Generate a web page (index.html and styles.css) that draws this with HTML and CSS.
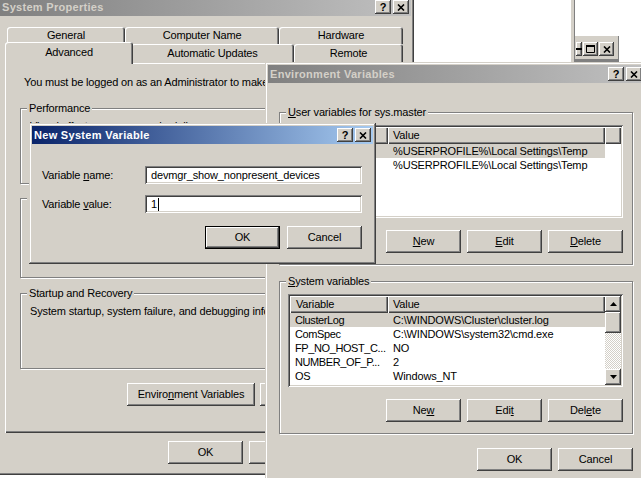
FILE: index.html
```html
<!DOCTYPE html>
<html lang="en">
<head>
    <meta charset="UTF-8">
    <title>System Properties</title>
    <link rel="stylesheet" href="styles.css">
</head>
<body>
    <!-- bits of the windows lying behind -->
    <div class="bg-edge"></div>
    <div class="bg-bar">
        <div class="tbtn cut">
            <svg width="6" height="2" viewBox="0 0 6 2"><path d="M0 1h6" stroke="#000" stroke-width="2"/></svg>
        </div>
        <div class="tbtn">
            <svg width="9" height="8" viewBox="0 0 9 8"><path d="M0.5 1.5h8v6h-8z" fill="none" stroke="#000"/><path d="M0 1h9" stroke="#000" stroke-width="2"/></svg>
        </div>
        <div class="tbtn">
            <svg width="8" height="7" viewBox="0 0 8 7"><path d="M1 0.5l6 6M7 0.5l-6 6" stroke="#000" stroke-width="1.6"/></svg>
        </div>
    </div>

    <!-- System Properties -->
    <div class="win sysprops">
        <div class="title inactive">
            <span class="caption">System Properties</span>
            <div class="tbtn help">?</div>
            <div class="tbtn">
                <svg width="8" height="7" viewBox="0 0 8 7"><path d="M1 0.5l6 6M7 0.5l-6 6" stroke="#000" stroke-width="1.6"/></svg>
            </div>
        </div>
        <div class="tabs">
            <div class="tab-row back">
                <div class="tab t-general">General</div>
                <div class="tab t-name">Computer Name</div>
                <div class="tab t-hardware">Hardware</div>
            </div>
            <div class="tab-row front">
                <div class="tab t-advanced sel">Advanced</div>
                <div class="tab t-updates">Automatic Updates</div>
                <div class="tab t-remote">Remote</div>
            </div>
        </div>
        <div class="panel">
            <div class="note">You must be logged on as an Administrator to make most of these changes.</div>
            <div class="group perf">
                <span class="group-label">Performance</span>
                <div class="group-text">Visual effects, processor scheduling, memory usage, and virtual memory</div>
                <div class="group-foot"><button class="btn">Settings</button></div>
            </div>
            <div class="group profiles">
                <span class="group-label">User Profiles</span>
                <div class="group-text">Desktop settings related to your logon</div>
                <div class="group-foot"><button class="btn">Settings</button></div>
            </div>
            <div class="group startup">
                <span class="group-label">Startup and Recovery</span>
                <div class="group-text">System startup, system failure, and debugging information</div>
                <div class="group-foot"><button class="btn">Settings</button></div>
            </div>
            <div class="panel-buttons">
                <button class="btn wide">Enviro<u>n</u>ment Variables</button>
                <button class="btn wider">E<u>r</u>ror Reporting</button>
            </div>
        </div>
        <div class="dlg-buttons sys">
            <button class="btn">OK</button>
            <button class="btn">Cancel</button>
            <button class="btn"><u>A</u>pply</button>
        </div>
    </div>

    <!-- Environment Variables -->
    <div class="win envvars">
        <div class="title inactive">
            <span class="caption">Environment Variables</span>
            <div class="tbtn help">?</div>
            <div class="tbtn">
                <svg width="8" height="7" viewBox="0 0 8 7"><path d="M1 0.5l6 6M7 0.5l-6 6" stroke="#000" stroke-width="1.6"/></svg>
            </div>
        </div>
        <div class="env-body">
            <div class="group env-group">
                <span class="group-label"><u>U</u>ser variables for sys.master</span>
                <div class="list">
                    <div class="list-main">
                        <div class="list-head">
                            <div class="hcell c-var">Variable</div>
                            <div class="hcell c-val">Value</div>
                            <div class="hcell c-fill"></div>
                        </div>
                        <div class="lrow sel"><span class="c-var">TEMP</span><span class="c-val">%USERPROFILE%\Local Settings\Temp</span></div>
                        <div class="lrow"><span class="c-var">TMP</span><span class="c-val">%USERPROFILE%\Local Settings\Temp</span></div>
                    </div>
                </div>
                <div class="group-buttons">
                    <button class="btn"><u>N</u>ew</button>
                    <button class="btn"><u>E</u>dit</button>
                    <button class="btn"><u>D</u>elete</button>
                </div>
            </div>
            <div class="group env-group system">
                <span class="group-label"><u>S</u>ystem variables</span>
                <div class="list">
                    <div class="list-main">
                        <div class="list-head">
                            <div class="hcell c-var">Variable</div>
                            <div class="hcell c-val">Value</div>
                        </div>
                        <div class="lrow sel"><span class="c-var">ClusterLog</span><span class="c-val">C:\WINDOWS\Cluster\cluster.log</span></div>
                        <div class="lrow"><span class="c-var">ComSpec</span><span class="c-val">C:\WINDOWS\system32\cmd.exe</span></div>
                        <div class="lrow"><span class="c-var">FP_NO_HOST_C...</span><span class="c-val">NO</span></div>
                        <div class="lrow"><span class="c-var">NUMBER_OF_P...</span><span class="c-val">2</span></div>
                        <div class="lrow"><span class="c-var">OS</span><span class="c-val">Windows_NT</span></div>
                    </div>
                    <div class="scrollbar">
                        <div class="sbtn">
                            <svg width="7" height="4" viewBox="0 0 7 4"><path d="M3.5 0L7 4H0z" fill="#000"/></svg>
                        </div>
                        <div class="thumb"></div>
                        <div class="track"></div>
                        <div class="sbtn">
                            <svg width="7" height="4" viewBox="0 0 7 4"><path d="M0 0h7L3.5 4z" fill="#000"/></svg>
                        </div>
                    </div>
                </div>
                <div class="group-buttons">
                    <button class="btn">Ne<u>w</u></button>
                    <button class="btn">Edi<u>t</u></button>
                    <button class="btn">Del<u>e</u>te</button>
                </div>
            </div>
            <div class="dlg-buttons env">
                <button class="btn">OK</button>
                <button class="btn">Cancel</button>
            </div>
        </div>
    </div>

    <!-- New System Variable -->
    <div class="win newvar">
        <div class="title active">
            <span class="caption">New System Variable</span>
            <div class="tbtn help">?</div>
            <div class="tbtn">
                <svg width="8" height="7" viewBox="0 0 8 7"><path d="M1 0.5l6 6M7 0.5l-6 6" stroke="#000" stroke-width="1.6"/></svg>
            </div>
        </div>
        <div class="form">
            <div class="field-row">
                <label>Variable <u>n</u>ame:</label>
                <div class="textbox">devmgr_show_nonpresent_devices</div>
            </div>
            <div class="field-row">
                <label>Variable <u>v</u>alue:</label>
                <div class="textbox">1<span class="caret"></span></div>
            </div>
            <div class="form-buttons">
                <button class="btn default">OK</button>
                <button class="btn">Cancel</button>
            </div>
        </div>
    </div>
</body>
</html>
```

FILE: styles.css
```css
* {
    box-sizing: border-box;
}
body {
    margin: 0;
    width: 641px;
    height: 478px;
    overflow: hidden;
    position: relative;
    background: #fff;
    font-family: "Liberation Sans", Arial, sans-serif;
    font-size: 11px;
    line-height: 13px;
    letter-spacing: -0.15px;
    color: #000;
}
u {
    text-decoration-thickness: 1px;
    text-underline-offset: 1px;
}

/* windows behind */
.bg-edge {
    position: absolute;
    left: 570px;
    top: 0;
    width: 5px;
    height: 62px;
    background: #d4d0c8;
    box-shadow: inset -1px 0 #808080, inset 1px 0 #fff;
}
.bg-bar {
    position: absolute;
    left: 575px;
    top: 36px;
    width: 44px;
    height: 26px;
    display: flex;
    justify-content: flex-end;
    padding: 6px 5px 0 0;
    background: #d4d0c8;
    box-shadow: inset 0 -3px #808080, inset -1px 0 #808080;
}
.bg-bar .tbtn {
    width: 15px;
}
.bg-bar .tbtn + .tbtn {
    margin-left: 1px;
}
.bg-bar .cut {
    width: 6px;
    overflow: hidden;
}

/* window frame */
.win {
    position: absolute;
    display: flex;
    flex-direction: column;
    padding: 3px;
    background: #d4d0c8;
    box-shadow: inset -1px -1px #404040, inset 1px 1px #d4d0c8, inset -2px -2px #808080, inset 2px 2px #fff;
}
.sysprops {
    left: -3px;
    top: -5px;
    width: 417px;
    height: 480px;
}
.envvars {
    left: 265px;
    top: 62px;
    width: 382px;
    height: 430px;
}
.newvar {
    left: 29px;
    top: 123px;
    width: 347px;
    height: 141px;
}
.title {
    flex: none;
    height: 18px;
    display: flex;
    align-items: center;
    padding: 0 2px;
    font-weight: bold;
    letter-spacing: 0.3px;
}
.title .caption {
    flex: 1;
    white-space: nowrap;
}
.title.inactive {
    background: linear-gradient(to right, #808080, #c0c0c0);
    color: #d4d0c8;
}
.title.active {
    background: linear-gradient(to right, #0a246a, #a6caf0);
    color: #fff;
}
.tbtn {
    flex: none;
    width: 16px;
    height: 14px;
    display: flex;
    align-items: center;
    justify-content: center;
    background: #d4d0c8;
    color: #000;
    letter-spacing: 0;
    box-shadow: inset -1px -1px #404040, inset 1px 1px #fff, inset -2px -2px #808080;
}
.tbtn + .tbtn {
    margin-left: 2px;
}
.tbtn.help {
    font-size: 11px;
    padding-top: 1px;
}

/* buttons */
.btn {
    width: 75px;
    height: 23px;
    padding: 0;
    border: none;
    font: inherit;
    letter-spacing: inherit;
    color: #000;
    background: #d4d0c8;
    box-shadow: inset -1px -1px #404040, inset 1px 1px #fff, inset -2px -2px #808080;
}
.btn.default {
    box-shadow: inset 0 0 0 1px #000, inset -2px -2px #404040, inset 2px 2px #fff, inset -3px -3px #808080;
}
.btn.wide {
    width: 128px;
}
.btn.wider {
    width: 130px;
}

/* tabs */
.tabs {
    margin-top: 11px;
    padding: 0 6px 0 5px;
}
.tab-row {
    display: flex;
    padding-left: 2px;
}
.tab-row.back {
    height: 17px;
}
.tab-row.front {
    height: 19px;
}
.tab {
    display: flex;
    align-items: center;
    justify-content: center;
    background: #d4d0c8;
    border-radius: 3px 3px 0 0;
    box-shadow: inset 1px 1px #fff, inset -1px 0 #404040, inset -2px 0 #808080;
}
.tab.sel {
    position: relative;
    z-index: 1;
    height: 22px;
    margin: -2px -2px 0;
    padding-bottom: 2px;
}
.t-general { width: 118px; }
.t-name { width: 154px; }
.t-hardware { width: 124px; }
.t-advanced { width: 128px; }
.t-updates { width: 163px; }
.t-remote { width: 109px; }

.panel {
    flex: none;
    height: 370px;
    margin: 0 6px 0 5px;
    padding: 13px 15px 0;
    box-shadow: inset 1px 1px #fff, inset -1px -1px #404040, inset -2px -2px #808080;
}
.note {
    padding-left: 4px;
    white-space: nowrap;
}

/* group boxes */
.group {
    position: relative;
    border: 1px solid #808080;
    box-shadow: inset 1px 1px #fff, 1px 1px #fff;
}
.group-label {
    position: absolute;
    top: -7px;
    left: 6px;
    padding: 0 2px;
    background: #d4d0c8;
    white-space: nowrap;
}
.perf, .profiles, .startup {
    display: flex;
    flex-direction: column;
    padding: 11px 8px 6px 9px;
}
.perf {
    height: 76px;
    margin-top: 19px;
}
.profiles {
    height: 80px;
    margin-top: 14px;
}
.startup {
    height: 76px;
    margin-top: 15px;
}
.group-text {
    white-space: nowrap;
    overflow: hidden;
}
.group-foot {
    margin-top: auto;
    display: flex;
    justify-content: flex-end;
}
.panel-buttons {
    display: flex;
    justify-content: flex-end;
    gap: 5px;
    margin-top: 14px;
}
.dlg-buttons {
    display: flex;
    justify-content: flex-end;
    gap: 6px;
}
.dlg-buttons.sys {
    margin: 8px 6px 0 0;
}

/* environment variables */
.env-body {
    padding: 29px 11px 0;
}
.env-group {
    height: 153px;
    padding: 12px 9px 0 8px;
}
.env-group.system {
    margin-top: 16px;
}
.list {
    display: flex;
    height: 93px;
    padding: 2px;
    background: #fff;
    overflow: hidden;
    box-shadow: inset 1px 1px #808080, inset -1px -1px #fff, inset 2px 2px #404040, inset -2px -2px #d4d0c8;
}
.list-main {
    flex: 1;
    overflow: hidden;
}
.list-head {
    display: flex;
    height: 17px;
}
.hcell {
    display: flex;
    align-items: center;
    background: #d4d0c8;
    box-shadow: inset 1px 1px #fff, inset -1px -1px #404040, inset -2px -2px #808080;
}
.c-var {
    width: 98px;
    flex: none;
    padding-left: 6px;
    white-space: nowrap;
    overflow: hidden;
}
.lrow .c-var {
    padding-left: 5px;
    letter-spacing: -0.4px;
}
.c-val {
    width: 217px;
    flex: none;
    padding-left: 5px;
    white-space: nowrap;
    overflow: hidden;
}
.c-fill {
    flex: 1;
}
.lrow {
    display: flex;
    height: 14px;
    width: 315px;
    align-items: center;
}
.lrow.sel {
    background: #d4d0c8;
}
.scrollbar {
    width: 16px;
    display: flex;
    flex-direction: column;
}
.sbtn {
    height: 16px;
    display: flex;
    align-items: center;
    justify-content: center;
    background: #d4d0c8;
    box-shadow: inset -1px -1px #404040, inset 1px 1px #fff, inset -2px -2px #808080;
}
.thumb {
    height: 21px;
    background: #d4d0c8;
    box-shadow: inset -1px -1px #404040, inset 1px 1px #fff, inset -2px -2px #808080;
}
.track {
    flex: 1;
    background: repeating-conic-gradient(#fff 0 25%, #d4d0c8 0 50%) 0 0 / 2px 2px;
}
.group-buttons {
    display: flex;
    justify-content: flex-end;
    gap: 6px;
    margin-top: 12px;
}
.dlg-buttons.env {
    margin-top: 14px;
}

/* new system variable */
.form {
    padding: 22px 11px 0 10px;
}
.field-row {
    display: flex;
    align-items: center;
    height: 18px;
}
.field-row + .field-row {
    margin-top: 11px;
}
.field-row label {
    width: 103px;
    flex: none;
}
.textbox {
    flex: 1;
    height: 18px;
    display: flex;
    align-items: center;
    padding: 0 4px 0 6px;
    background: #fff;
    white-space: nowrap;
    box-shadow: inset 1px 1px #808080, inset -1px -1px #fff, inset 2px 2px #404040, inset -2px -2px #d4d0c8;
}
.caret {
    display: inline-block;
    width: 1px;
    height: 13px;
    margin-left: 1px;
    background: #000;
}
.form-buttons {
    display: flex;
    justify-content: flex-end;
    gap: 7px;
    margin-top: 13px;
}
```
